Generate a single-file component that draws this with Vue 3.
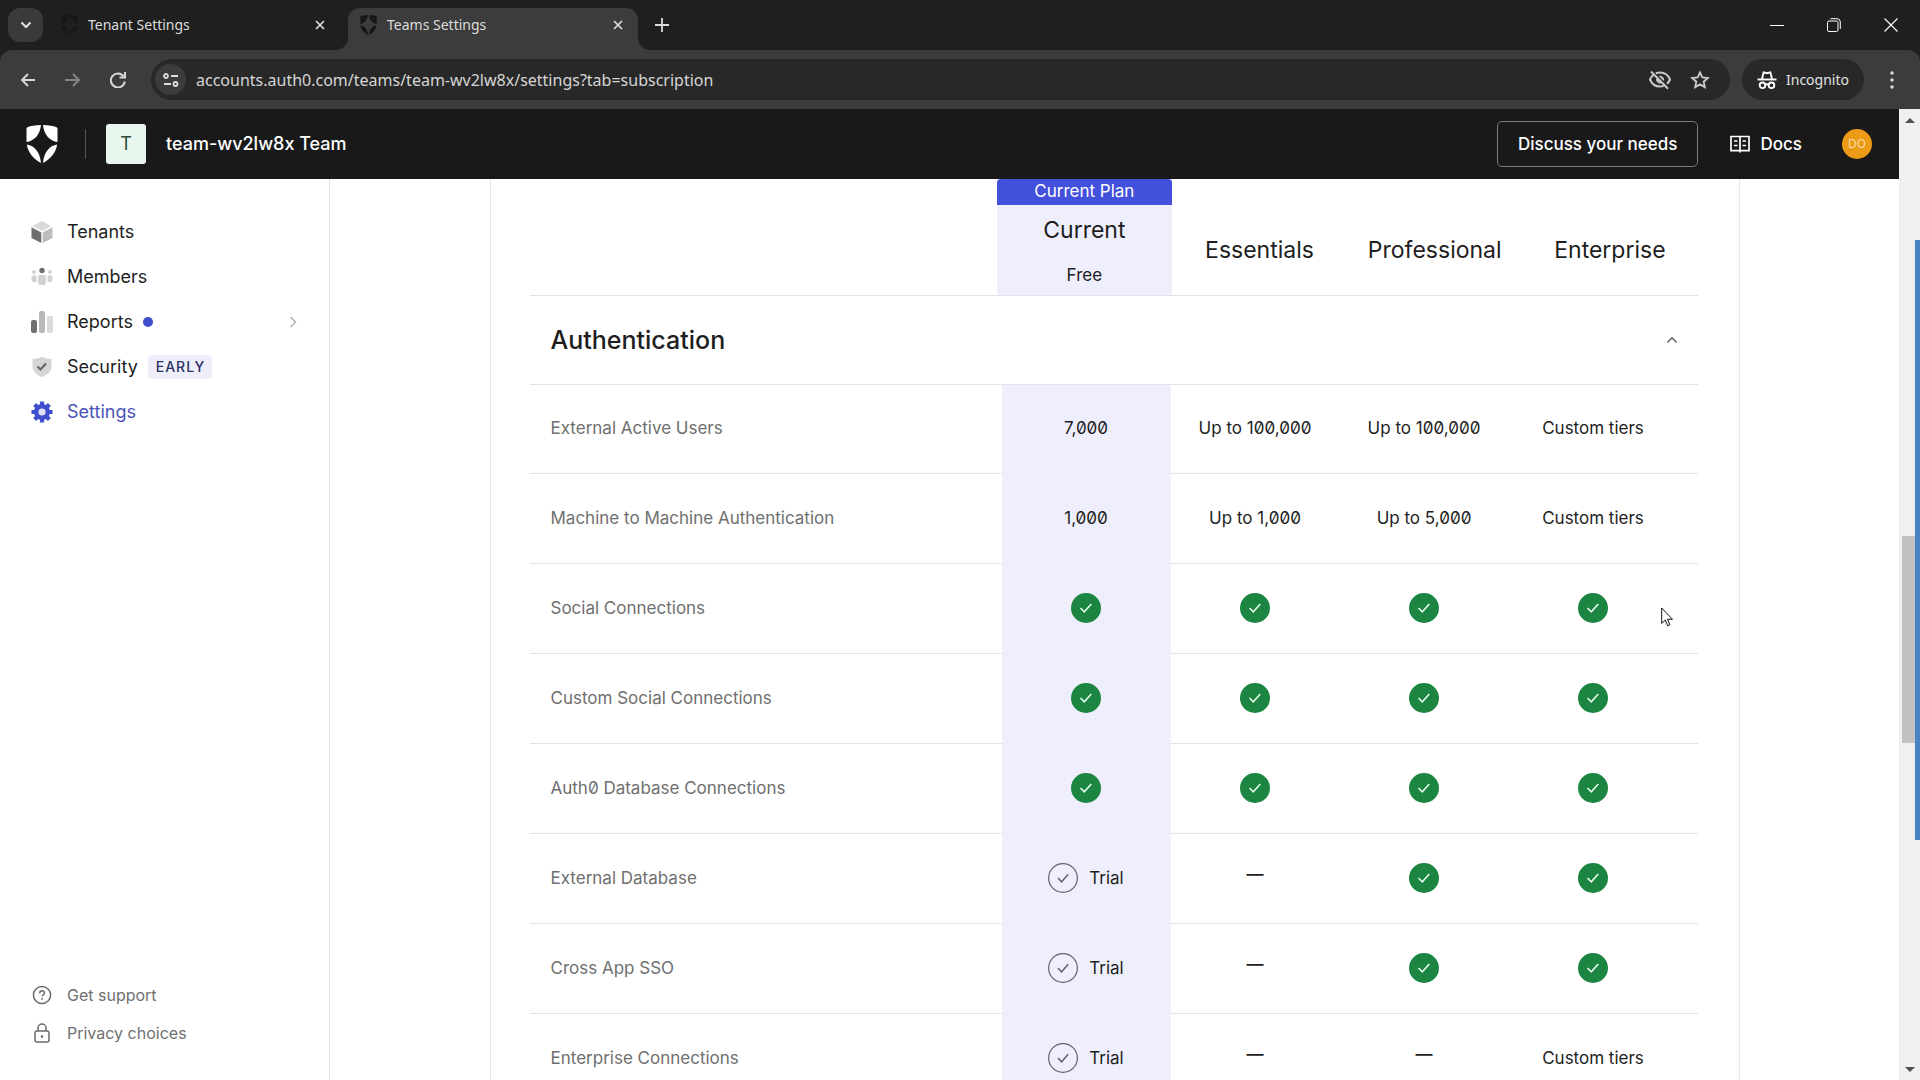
<script setup>
import { ref } from 'vue'

const tabs = [
  { title: 'Tenant Settings', active: false },
  { title: 'Teams Settings', active: true },
]

const navItems = [
  { id: 'tenants', label: 'Tenants' },
  { id: 'members', label: 'Members' },
  { id: 'reports', label: 'Reports', dot: true, expandable: true },
  { id: 'security', label: 'Security', badge: 'EARLY' },
  { id: 'settings', label: 'Settings', active: true },
]

const plans = ['Essentials', 'Professional', 'Enterprise']

const features = [
  { name: 'External Active Users', values: ['7,000', 'Up to 100,000', 'Up to 100,000', 'Custom tiers'] },
  { name: 'Machine to Machine Authentication', values: ['1,000', 'Up to 1,000', 'Up to 5,000', 'Custom tiers'] },
  { name: 'Social Connections', values: ['yes', 'yes', 'yes', 'yes'] },
  { name: 'Custom Social Connections', values: ['yes', 'yes', 'yes', 'yes'] },
  { name: 'Auth0 Database Connections', values: ['yes', 'yes', 'yes', 'yes'] },
  { name: 'External Database', values: ['trial', 'no', 'yes', 'yes'] },
  { name: 'Cross App SSO', values: ['trial', 'no', 'yes', 'yes'] },
  { name: 'Enterprise Connections', values: ['trial', 'no', 'no', 'Custom tiers'] },
]

const url = ref('accounts.auth0.com/teams/team-wv2lw8x/settings?tab=subscription')
const open = ref(true)
</script>

<template>
  <div class="window">
    <div class="tabstrip">
      <button class="tab-search" aria-label="Search tabs">
        <svg width="12" height="8" viewBox="0 0 12 8"><path d="M1.500 1.500 6 6l4.500-4.500" fill="none" stroke="#e3e3e3" stroke-width="2" /></svg>
      </button>
      <div class="tabs">
        <div v-for="tab in tabs" :key="tab.title" class="tab" :class="{ active: tab.active }">
          <svg class="favicon" width="17" height="20" viewBox="0 0 31 38">
            <path d="M14.500 0C9 .2 4 .9 1 2.200.3 2.500 0 3 0 3.800V17c7.500-1 13.500-7 14.500-17ZM16.500 0c5.500.2 10.500.9 13.500 2.200.7.3 1 .8 1 1.600V17c-7.500-1-13.500-7-14.500-17ZM.3 19.500c7.700 1 13.400 8 14.200 18.500C7.500 34.500 1.500 27.500.3 19.500ZM30.700 19.500c-7.700 1-13.400 8-14.200 18.500 7-3.500 13-10.500 14.200-18.500Z" />
          </svg>
          <span class="tab-title">{{ tab.title }}</span>
          <button class="plain" aria-label="Close tab">
            <svg width="10" height="10" viewBox="0 0 10 10"><path d="m1 1 8 8M9 1 1 9" stroke="#dcdcdc" stroke-width="1.700" /></svg>
          </button>
        </div>
      </div>
      <button class="plain new-tab" aria-label="New tab">
        <svg width="14" height="14" viewBox="0 0 14 14"><path d="M7 0v14M0 7h14" stroke="#dcdcdc" stroke-width="1.800" /></svg>
      </button>
      <div class="window-controls">
        <button class="plain" aria-label="Minimize"><svg width="14" height="14" viewBox="0 0 14 14"><path d="M0 7.500h14" stroke="#fff" /></svg></button>
        <button class="plain" aria-label="Restore">
          <svg width="14" height="14" viewBox="0 0 14 14" fill="none" stroke="#fff"><rect x=".5" y="3" width="10.500" height="10.500" rx="1.500" /><path d="M3.500.7H10A3.300 3.300 0 0 1 13.300 4v7" /></svg>
        </button>
        <button class="plain" aria-label="Close"><svg width="14" height="14" viewBox="0 0 14 14"><path d="m.5.5 13 13m0-13-13 13" stroke="#fff" stroke-width="1.100" /></svg></button>
      </div>
    </div>

    <div class="toolbar-back">
      <div class="toolbar">
        <div class="nav-buttons">
          <button class="plain" aria-label="Back"><svg width="16" height="16" viewBox="0 0 16 16" fill="none" stroke="#d6d6d6" stroke-width="2"><path d="M15 8H2M8 2 2 8l6 6" /></svg></button>
          <button class="plain" aria-label="Forward"><svg width="16" height="16" viewBox="0 0 16 16" fill="none" stroke="#858585" stroke-width="2"><path d="M0 8h14M8 2l6 6-6 6" /></svg></button>
          <button class="plain" aria-label="Reload"><svg width="16" height="16" viewBox="0 0 16 16" fill="none" stroke="#d6d6d6" stroke-width="2"><path d="M13.500 4.200A7 7 0 1 0 14.800 9.500M15 0v5.500H9.500" /></svg></button>
        </div>
        <div class="omnibox">
          <button class="site-info" aria-label="Site information">
            <svg width="16" height="14" viewBox="0 0 16 14" fill="none" stroke="#dcdcdc" stroke-width="1.800"><circle cx="3" cy="3" r="2" /><path d="M8 3h7M1 11h7" /><circle cx="12.500" cy="11" r="2" /></svg>
          </button>
          <input v-model="url" class="url" aria-label="Address" />
          <button class="plain" aria-label="Third-party cookies blocked">
            <svg width="24" height="20" viewBox="0 0 24 20" fill="none" stroke="#c9c9c9" stroke-width="2"><path d="M3 1.500 20 18.800M7.800 3.300C9.100 2.800 10.500 2.500 12 2.500c4.500 0 8.200 2.600 10 7-.7 1.700-1.700 3.100-3 4.200M15.700 15.800c-1.200.5-2.400.7-3.700.7-4.500 0-8.200-2.600-10-7C2.800 7.600 4 6 5.500 4.800" /><path d="M11.500 6.200a3.600 3.600 0 0 1 4.100 4.200ZM8.500 8.800a3.600 3.600 0 0 0 4.400 4.200Z" fill="#c9c9c9" stroke-width="1" /></svg>
          </button>
          <button class="plain" aria-label="Bookmark">
            <svg width="20" height="20" viewBox="0 0 20 20" fill="none" stroke="#c9c9c9" stroke-width="1.900"><path d="m10 2.400 2.300 5 5.500.6-4.100 3.700 1.100 5.400-4.800-2.700-4.800 2.700 1.100-5.400L2.200 8l5.500-.6Z" /></svg>
          </button>
        </div>
        <button class="incognito">
          <svg width="20" height="20" viewBox="0 0 20 20" fill="none" stroke="#fff" stroke-width="1.900"><path d="M.5 9.500h19" /><path d="M5 9 6.600 2.300 10 3.200l3.400-.9L15 9" /><circle cx="5.500" cy="15.300" r="2.800" /><circle cx="14.500" cy="15.300" r="2.800" /><path d="M8 14.700c1.300-.6 2.700-.6 4 0" /></svg>
          Incognito
        </button>
        <button class="plain menu" aria-label="Menu">
          <svg width="4" height="18" viewBox="0 0 4 18" fill="#d6d6d6"><circle cx="2" cy="2" r="1.800" /><circle cx="2" cy="9" r="1.800" /><circle cx="2" cy="16" r="1.800" /></svg>
        </button>
      </div>
    </div>

    <div class="viewport">
      <div class="page">
        <header class="app-header">
          <a href="#" class="logo" aria-label="Auth0">
            <svg width="32" height="38" viewBox="0 0 31 38" fill="#fff">
              <path d="M14.500 0C9 .2 4 .9 1 2.200.3 2.500 0 3 0 3.800V17c7.500-1 13.500-7 14.500-17ZM16.500 0c5.500.2 10.500.9 13.500 2.200.7.3 1 .8 1 1.600V17c-7.500-1-13.500-7-14.500-17ZM.3 19.500c7.700 1 13.400 8 14.200 18.500C7.500 34.500 1.500 27.500.3 19.500ZM30.700 19.500c-7.700 1-13.400 8-14.200 18.500 7-3.500 13-10.500 14.200-18.500Z" />
            </svg>
          </a>
          <span class="divider"></span>
          <span class="team-tile">T</span>
          <span class="team-name">team-wv2lw8x Team</span>
          <button class="discuss">Discuss your needs</button>
          <a href="#" class="docs">
            <svg width="20" height="18" viewBox="0 0 20 18" fill="none" stroke="#fff" stroke-width="1.700"><path d="M1 1.500h18v14.200H1ZM10 1.500v16M4 6h3.500M4 10.500h3.500M12.500 6H16M12.500 10.500H16" /></svg>
            Docs
          </a>
          <button class="avatar">DO</button>
        </header>

        <div class="body">
          <aside class="sidebar">
            <nav class="nav">
              <a v-for="item in navItems" :key="item.id" href="#" class="nav-item" :class="{ active: item.active }">
                <svg v-if="item.id === 'tenants'" width="22" height="22" viewBox="0 0 22 22"><path d="M11 0 20.500 5 11 10 1.500 5Z" fill="#dadada" /><path d="M.5 6.300 10.300 11.400V22L.5 17Z" fill="#6f6f6f" /><path d="M21.500 6.300 11.700 11.400V22l9.800-5Z" fill="#bdbdbd" /></svg>
                <svg v-else-if="item.id === 'members'" width="22" height="22" viewBox="0 0 22 22" fill="#d2d2d2"><circle cx="11" cy="4.500" r="2.700" fill="#6f6f6f" /><circle cx="3" cy="6" r="2" /><circle cx="19" cy="6" r="2" /><path d="M7 11a2 2 0 0 1 2-2h4a2 2 0 0 1 2 2v5l-1 3H8l-1-3ZM.5 11a1.500 1.500 0 0 1 1.500-1.500h3.500V16H2L.5 14ZM21.500 11A1.500 1.500 0 0 0 20 9.500h-3.500V16H20l1.500-2Z" /></svg>
                <svg v-else-if="item.id === 'reports'" width="22" height="22" viewBox="0 0 22 22"><rect y="9" width="6" height="13" rx="2" fill="#6f6f6f" /><rect x="8" width="6" height="22" rx="2" fill="#b9b9b9" /><rect x="16" y="5" width="6" height="17" rx="2" fill="#dadada" /></svg>
                <svg v-else-if="item.id === 'security'" width="22" height="22" viewBox="0 0 22 22"><path d="M11 .8c3 1.500 6 2.200 9.500 2.200v7.500c0 5-4.500 8.500-9.500 10.700C6 19 1.500 15.500 1.500 10.500V3C5 3 8 2.300 11 .8Z" fill="#d5d5d5" /><path d="m6.500 10.500 3 3L15 7.500" fill="none" stroke="#666" stroke-width="2.200" /></svg>
                <svg v-else width="22" height="22" viewBox="0 0 22 22"><circle cx="11" cy="11" r="8" fill="#3f4ecb" /><path d="M11 .5v21M.5 11h21M3.600 3.600l14.800 14.800M18.400 3.600 3.600 18.400" stroke="#3f4ecb" stroke-width="4.200" /><circle cx="11" cy="11" r="3.600" fill="#dfe1fb" /></svg>
                <span>{{ item.label }}</span>
                <span v-if="item.dot" class="dot"></span>
                <span v-if="item.badge" class="badge">{{ item.badge }}</span>
                <svg v-if="item.expandable" class="expand" width="8" height="12" viewBox="0 0 8 12"><path d="m1.500 1 5 5-5 5" fill="none" stroke="#ababab" stroke-width="1.300" /></svg>
              </a>
            </nav>
            <div class="support">
              <a href="#">
                <svg width="22" height="20" viewBox="0 0 22 20" fill="none" stroke="#6b6b6b" stroke-width="1.500"><circle cx="11" cy="10" r="8.600" /><path d="M8.700 8.300c0-3.200 4.700-3.200 4.700-.3 0 1.700-2.300 1.800-2.300 3.600" /><path d="M11 13v1.700" /></svg>
                Get support
              </a>
              <a href="#">
                <svg width="22" height="20" viewBox="0 0 22 20" fill="none" stroke="#6b6b6b" stroke-width="1.500"><rect x="4" y="8" width="14" height="11" rx="2" /><path d="M7 8V5a4 4 0 0 1 8 0v3" /><circle cx="11" cy="13.500" r=".6" /></svg>
                Privacy choices
              </a>
            </div>
          </aside>

          <main class="main">
            <div class="panel">
              <table class="plans">
                <thead>
                  <tr>
                    <td></td>
                    <th scope="col" class="current">
                      <div class="ribbon">Current Plan</div>
                      <div class="current-plan">
                        <span>Current</span>
                        <small>Free</small>
                      </div>
                    </th>
                    <th v-for="plan in plans" :key="plan" scope="col" class="plan">{{ plan }}</th>
                  </tr>
                </thead>
              </table>

              <h2 class="section-title">
                <button :aria-expanded="open" @click="open = !open">
                  Authentication
                  <svg width="12" height="8" viewBox="0 0 12 8"><path d="M1.500 6.500 6 1.800l4.500 4.700" fill="none" stroke="#555" stroke-width="1.300" /></svg>
                </button>
              </h2>

              <table v-if="open" class="features">
                <tbody>
                  <tr v-for="row in features" :key="row.name">
                    <th scope="row">{{ row.name }}</th>
                    <td v-for="(value, i) in row.values" :key="i">
                      <svg v-if="value === 'yes'" class="mark" role="img" aria-label="Included" width="30" height="30" viewBox="0 0 30 30"><circle cx="15" cy="15" r="15" fill="#1c8541" /><path d="m9.500 15 3.800 3.800 7-7.800" fill="none" stroke="#e9fff0" stroke-width="1.500" /></svg>
                      <span v-else-if="value === 'trial'" class="trial">
                        <svg class="mark" width="30" height="30" viewBox="0 0 30 30" fill="none" stroke="#63636e"><circle cx="15" cy="15" r="14.400" stroke-width="1.200" /><path d="m10 15 3.600 3.800 6.600-7.600" stroke-width="1.500" /></svg>
                        Trial
                      </span>
                      <span v-else-if="value === 'no'" class="none">—</span>
                      <template v-else>{{ value }}</template>
                    </td>
                  </tr>
                </tbody>
              </table>
            </div>
          </main>
        </div>
      </div>

      <div class="scrollbar">
        <svg width="10" height="5" viewBox="0 0 10 5"><path d="M5 0 10 5H0Z" fill="#505050" /></svg>
        <div class="track"><div class="thumb"></div></div>
        <svg width="10" height="5" viewBox="0 0 10 5"><path d="M0 0h10L5 5Z" fill="#505050" /></svg>
      </div>
      <div class="edge-strip"></div>
    </div>

    <svg class="pointer" width="13" height="20" viewBox="0 0 13 20"><path d="M.7 1v15.500l3.600-3.400 2.400 5.700 2.200-1-2.400-5.500h5Z" fill="#fff" stroke="#111" /></svg>
  </div>
</template>

<style>
body {
  margin: 0;
  background: #fff;
}
</style>

<style scoped>
* {
  box-sizing: border-box;
}
.window {
  position: relative;
  display: flex;
  flex-direction: column;
  height: 100vh;
  overflow: hidden;
  font-family: Inter, "Liberation Sans", sans-serif;
  font-size: 17px;
  line-height: 24px;
  color: #1e1e1e;
}
button {
  font: inherit;
  color: inherit;
  border: 0;
  background: none;
  padding: 0;
}
a {
  color: inherit;
  text-decoration: none;
}
svg {
  display: block;
  flex: none;
}
.plain {
  display: flex;
  align-items: center;
  justify-content: center;
}

/* Browser chrome */
.tabstrip {
  display: flex;
  align-items: center;
  height: 50px;
  flex: none;
  padding-left: 8px;
  background: #1f1f1f;
  font-family: "Noto Sans", sans-serif;
  font-size: 14px;
  color: #dcdcdc;
}
.tab-search {
  display: grid;
  place-items: center;
  width: 35px;
  height: 34px;
  border-radius: 12px;
  background: #3a3a3a;
}
.tabs {
  display: flex;
  align-self: flex-end;
}
.tab {
  position: relative;
  display: flex;
  align-items: center;
  gap: 10px;
  width: 290px;
  height: 42px;
  padding: 0 15px 8px 12px;
}
.tab:first-child {
  width: 305px;
  padding: 0 23px 8px 18px;
}
.tab.active {
  background: #3c3c3c;
  border-radius: 12px 12px 0 0;
}
.tab.active::before,
.tab.active::after {
  content: "";
  position: absolute;
  bottom: 0;
  width: 12px;
  height: 12px;
}
.tab.active::before {
  right: 100%;
  background: radial-gradient(circle at 0 0, transparent 12px, #3c3c3c 12px);
}
.tab.active::after {
  left: 100%;
  background: radial-gradient(circle at 100% 0, transparent 12px, #3c3c3c 12px);
}
.favicon {
  fill: #171717;
}
.tab-title {
  flex: 1;
}
.new-tab {
  margin-left: 17px;
}
.window-controls {
  display: flex;
  gap: 43px;
  margin-left: auto;
  padding-right: 22px;
}
.toolbar-back {
  flex: none;
  background: #1f1f1f;
}
.toolbar {
  display: flex;
  align-items: center;
  height: 59px;
  padding-left: 20px;
  border-radius: 12px 12px 0 0;
  background: #3c3c3c;
  font-family: "Noto Sans", sans-serif;
  font-size: 16px;
}
.nav-buttons {
  display: flex;
  gap: 29px;
  margin-right: 25px;
}
.omnibox {
  display: flex;
  align-items: center;
  flex: 1;
  gap: 18px;
  height: 41px;
  padding: 0 20px 0 4px;
  border-radius: 21px;
  background: #282828;
}
.site-info {
  display: grid;
  place-items: center;
  width: 31px;
  height: 31px;
  border-radius: 50%;
  background: #3c3c3c;
}
.url {
  flex: 1;
  min-width: 0;
  margin-left: -8px;
  padding: 0;
  border: 0;
  outline: 0;
  background: none;
  color: #d6d6d6;
  font: inherit;
}
.incognito {
  display: flex;
  align-items: center;
  gap: 9px;
  height: 41px;
  margin-left: 12px;
  padding: 0 15px;
  border-radius: 21px;
  background: #282828;
  color: #e3e3e3;
  font-size: 14px;
}
.menu {
  width: 56px;
}

/* Page viewport */
.viewport {
  position: relative;
  display: flex;
  flex: 1;
  min-height: 0;
}
.page {
  display: flex;
  flex-direction: column;
  flex: 1;
  min-width: 0;
}
.app-header {
  display: flex;
  align-items: center;
  flex: none;
  height: 70px;
  padding: 0 27px 0 26px;
  background: #191919;
  color: #fff;
  font-weight: 500;
}
.divider {
  width: 1px;
  height: 30px;
  margin: 0 20px 0 27px;
  background: #555;
}
.team-tile {
  display: grid;
  place-items: center;
  width: 40px;
  height: 40px;
  margin-right: 20px;
  border-radius: 3px;
  background: #e7f7ee;
  color: #2d4a3b;
  font-size: 18px;
  font-weight: 400;
}
.team-name {
  font-size: 18px;
}
.discuss {
  height: 46px;
  margin-left: auto;
  padding: 0 20px;
  border: 1px solid #7a7a7a;
  border-radius: 5px;
}
.docs {
  display: flex;
  align-items: center;
  gap: 10px;
  margin: 0 40px 0 32px;
}
.avatar {
  width: 30px;
  height: 30px;
  border-radius: 50%;
  background: #eb9b16;
  color: #fbdca8;
  font-size: 12px;
  font-weight: 400;
}
.body {
  display: flex;
  flex: 1;
  min-height: 0;
}
.sidebar {
  display: flex;
  flex-direction: column;
  justify-content: space-between;
  flex: none;
  width: 330px;
  padding: 30px 32px 28px 31px;
  border-right: 1px solid #e3e3e3;
}
.nav-item {
  display: flex;
  align-items: center;
  height: 45px;
  gap: 10px;
  font-size: 18px;
}
.nav-item > svg:first-child {
  margin-right: 4px;
}
.nav-item.active {
  color: #4b52b8;
}
.dot {
  width: 10px;
  height: 10px;
  border-radius: 50%;
  background: #3f4ecb;
}
.badge {
  padding: 0 7px 0 8px;
  border-radius: 4px;
  background: #efeffc;
  color: #2c2f63;
  font-size: 14px;
  font-weight: 500;
  letter-spacing: 1px;
}
.expand {
  margin-left: auto;
}
.support a {
  display: flex;
  align-items: center;
  gap: 14px;
  height: 38px;
  color: #6f6f6f;
  font-size: 16px;
}
.main {
  flex: 1;
  min-width: 0;
  overflow: hidden;
}
.panel {
  max-width: 1250px;
  margin: 0 auto;
  padding: 0 41px 0 39px;
  border: solid #e8e8e8;
  border-width: 0 1px;
}
table {
  width: 100%;
  table-layout: fixed;
  border-collapse: separate;
  border-spacing: 0;
}
.plans th,
.plans td {
  height: 117px;
  padding: 0;
  border-bottom: 1px solid #e3e3e3;
  font-size: 23px;
  font-weight: 400;
}
.plans th {
  width: 15%;
}
.plans .current {
  background: #eeeefc;
}
.plans .plan {
  padding-top: 26px;
}
.ribbon {
  height: 26px;
  border-radius: 4px 4px 0 0;
  background: #4350db;
  color: #fff;
  font-size: 17px;
  line-height: 24px;
}
.current-plan {
  display: flex;
  flex-direction: column;
  justify-content: space-between;
  height: 90px;
  padding: 13px 0 8px;
}
.current-plan small {
  font-size: 17px;
}
.section-title {
  margin: 0;
  font-size: 25px;
  font-weight: 500;
}
.section-title button {
  display: flex;
  align-items: center;
  justify-content: space-between;
  width: 100%;
  height: 89px;
  padding: 0 20px 0 21px;
  border-bottom: 1px solid #e3e3e3;
}
.features {
  font-feature-settings: "zero";
}
.features th,
.features td {
  height: 90px;
  padding: 0 0 2px;
  border-bottom: 1px solid #e3e3e3;
  font-weight: 400;
  text-align: center;
}
.features tr:first-child > * {
  height: 89px;
}
.features th {
  padding-left: 21px;
  text-align: left;
  color: #6f6f6f;
}
.features td {
  width: 169px;
}
.features td:nth-child(2) {
  background: #eeeefc;
  border-color: #ebebf9;
}
.features td:last-child {
  width: 189px;
  padding-right: 20px;
}
.mark {
  margin: 0 auto;
}
.trial {
  display: inline-flex;
  align-items: center;
  gap: 11px;
  vertical-align: middle;
}
.none {
  display: block;
  padding-bottom: 8px;
  font-weight: 600;
}

/* Scroll rail */
.scrollbar {
  display: flex;
  flex-direction: column;
  align-items: center;
  flex: none;
  width: 21px;
  padding: 9px 0 8px;
  background: #f0f0f0;
}
.track {
  flex: 1;
  padding-top: 413px;
}
.thumb {
  width: 16px;
  height: 207px;
  background: #c1c1c1;
}
.edge-strip {
  position: absolute;
  top: 131px;
  right: 0;
  width: 5px;
  height: 600px;
  background: #4a80c4;
}
.pointer {
  position: absolute;
  left: 1661px;
  top: 607px;
}
</style>
